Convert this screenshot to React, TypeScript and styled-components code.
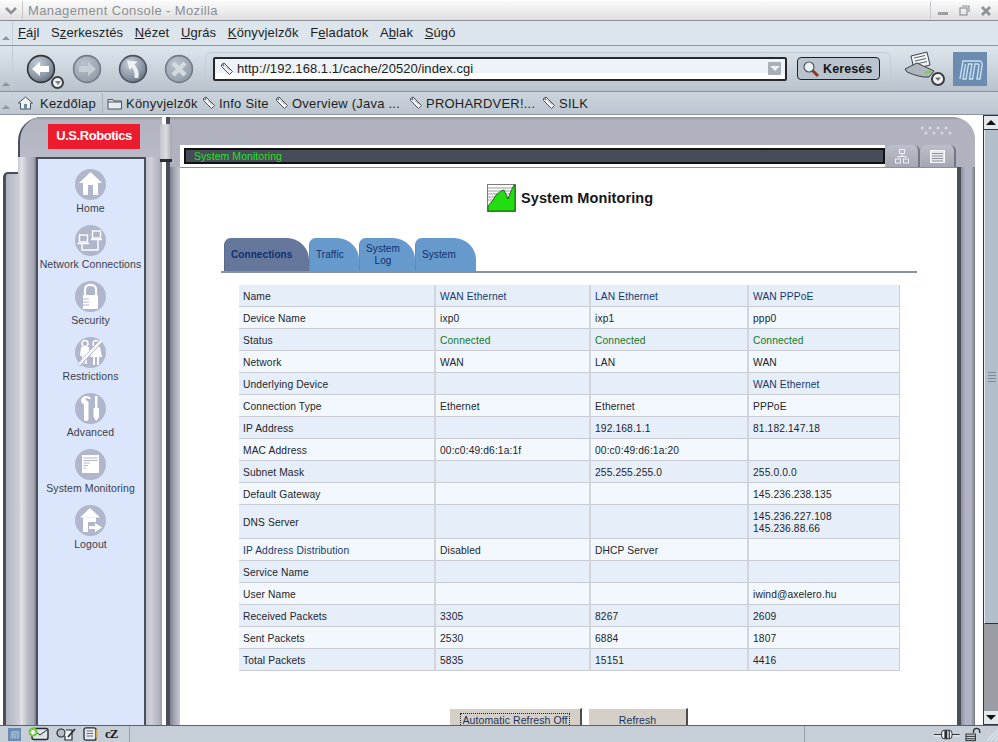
import React from "react";
import styled, { createGlobalStyle } from "styled-components";

const Global = createGlobalStyle`
  html, body { margin: 0; padding: 0; background: #fff; overflow: hidden; }
  #root { width: 998px; height: 742px; }
  * { box-sizing: border-box; }
`;

const DARK = "#4a4e58";
const SANS = `"Liberation Sans", Arial, sans-serif`;

const Window = styled.div`
  width: 998px; height: 742px; display: flex; flex-direction: column; overflow: hidden;
  font-family: ${SANS}; background: #fff;
`;

/* ---------- title bar ---------- */
const TitleBar = styled.div`
  height: 21px; flex: none; display: flex; align-items: stretch;
  background: linear-gradient(#fafafa 0, #f3f3f3 30%, #dedede 100%);
  border-top: 1px solid #fff; border-bottom: 1px solid #868c92;
`;
const TitleMenu = styled.div`
  width: 23px; display: flex; align-items: center; justify-content: center;
  border-right: 1px solid #c6c8ca;
`;
const TitleText = styled.div`
  flex: 1; padding-left: 5px; font-size: 13px; line-height: 19px; color: #8b8f93; letter-spacing: .38px;
`;
const TitleControls = styled.div`
  width: 68px; display: flex; align-items: center; gap: 10px; padding-left: 7px;
  border-left: 1px solid #c6c8ca;
`;

/* ---------- toolbars ---------- */
const BarRow = styled.div<{ $h: number; $bg: string }>`
  height: ${p => p.$h}px; flex: none; display: flex; align-items: stretch;
  background: ${p => p.$bg}; border-bottom: 1px solid #8c949c;
`;
const Grippy = styled.div`
  width: 13px; flex: none; display: flex; align-items: flex-end; justify-content: center;
  padding-bottom: 5px; border-right: 1px solid #c4ccd4; margin-right: 0;
  &::after { content: ""; border-left: 4px solid transparent; border-right: 4px solid transparent; border-bottom: 4px solid #8d959d; }
`;
const MenuList = styled.div`
  display: flex; align-items: center; gap: 11.6px; padding: 0 0 1px 5px;
  font-size: 13px; letter-spacing: .12px; color: #1d1f22;
`;
const ToolRow = styled.div`
  flex: 1; display: flex; align-items: center; padding-left: 13px;
`;
const NavButtons = styled.div`
  width: 179px; flex: none; display: flex; align-items: center; gap: 16px; position: relative;
`;
const BackDrop = styled.span`
  position: absolute; left: 25px; top: 22px; width: 13px; height: 13px; border-radius: 50%;
  background: #eef1f4; border: 2px solid #3c4046; display: flex; align-items: center; justify-content: center;
  &::after { content: ""; border-left: 3px solid transparent; border-right: 3px solid transparent; border-top: 4px solid #7a8088; margin-top: 1px; }
`;
const UrlBox = styled.div`
  width: 686px; height: 33px; flex: none; display: flex; align-items: center; gap: 10px;
  padding-left: 7px; border: 1px solid #c2cad2; border-radius: 6px;
`;
const UrlField = styled.div`
  width: 574px; height: 24px; display: flex; align-items: center; gap: 3px; padding: 0 4px 0 5px;
  border: 2px solid #26282c; border-radius: 2px;
  background: linear-gradient(#edf3f8 0, #edf3f8 72%, #fff 72%);
  font-size: 13px; letter-spacing: .05px; color: #1c1e20;
`;
const UrlText = styled.span`flex: 1;`;
const UrlDrop = styled.span`
  width: 13px; height: 13px; background: #a8afb9; display: flex; align-items: center; justify-content: center; border-radius: 1px;
  &::after { content: ""; border-left: 5px solid transparent; border-right: 5px solid transparent; border-top: 5px solid #eef2f5; }
`;
const SearchButton = styled.div`
  width: 83px; height: 23px; display: flex; align-items: center; gap: 3px; padding-left: 4px;
  border: 1px solid #1e2024; border-radius: 4px; background: #bac4ce;
  font-weight: bold; font-size: 12.5px; letter-spacing: .1px; color: #15171a;
`;
const RightIcons = styled.div`
  margin-left: 12px; display: flex; align-items: center; gap: 8px;
`;
const BookmarkRow = styled.div`
  flex: 1; display: flex; align-items: center; font-size: 13px; letter-spacing: .22px; color: #1d1f22;
`;
const HomeBookmark = styled.div`
  width: 90px; display: flex; align-items: center; gap: 7px; padding-left: 5px; height: 20px;
  border-right: 1px solid #aab2ba; margin-right: 4px;
`;
const Bookmark = styled.div<{ $w: number }>`
  width: ${p => p.$w}px; flex: none; display: flex; align-items: center; gap: 3px; white-space: nowrap;
`;

/* ---------- page area ---------- */
const ContentArea = styled.div`
  flex: 1; min-height: 0; display: flex; overflow: hidden; background: #fff; position: relative;
`;
const Page = styled.div`
  width: 983px; flex: none; display: flex; padding: 2px 8px 0 3px; position: relative; height: 700px;
`;
const OuterTab = styled.div`
  width: 15px; flex: none; margin-top: 55px; border-top-left-radius: 5px;
  border-left: 3px solid ${DARK}; border-top: 2px solid ${DARK};
  background: linear-gradient(90deg, #b2b4c0, #c0c2cc 60%, #cacbd4);
`;
const SideFrame = styled.div`
  width: 144px; flex: none; display: flex; flex-direction: column;
`;
const SideTop = styled.div`
  height: 40px; flex: none; padding: 7px 0 0 30px; background: linear-gradient(#8e909c 0, #b2b4c2 3px, #b8bac8 100%);
  border-top-left-radius: 24px; border-left: 2px solid ${DARK};
`;
const Logo = styled.div`
  width: 92px; height: 25px; margin-left: -2px; background: #ec1c2e; color: #fff; font-weight: bold; font-size: 13px;
  letter-spacing: -.45px; display: flex; align-items: center; justify-content: center; padding-bottom: 2px;
`;
const SideBody = styled.div`flex: 1; display: flex;`;
const SideRailL = styled.div`
  width: 18px; background: linear-gradient(90deg, #c8c9d2 0, #e2e3e7 20%, #b6b8c5 55%, #a8aab6 85%, #7c7e88 100%);
`;
const SideRailR = styled.div`
  width: 16px; background: linear-gradient(90deg, #bfc1cc 0, #cfd0d8 30%, #b2b4c0 80%, #9a9ca8 100%);
`;
const Nav = styled.nav`
  width: 110px; flex: none; background: #dbe5fb; border: 2px solid ${DARK}; border-bottom: none;
  padding: 10px 1px 0 0; display: flex; flex-direction: column; align-items: center;
`;
const NavItem = styled.div`
  height: 56px; width: 100%; flex: none; display: flex; flex-direction: column; align-items: center; gap: 2px;
  font-size: 10.5px; letter-spacing: .1px; color: #3a3f4c; white-space: nowrap;
`;
const Knob = styled.div`
  position: absolute; left: 160px; top: 9px; width: 12px; height: 38px; border-radius: 3px 3px 0 0;
  background: linear-gradient(90deg, #c2c4ce, #dcdde2 50%, #a2a4b0);
  border-bottom: 3px solid #2c2e34;
`;
const MainFrame = styled.div`
  margin-left: 4px; width: 809px; flex: none; display: flex; flex-direction: column;
  background: linear-gradient(#8e909c 0, #b0b2c0 3px, #b4b6c4 100%);
  border-radius: 0 22px 0 0; border-left: 4px solid ${DARK};
`;
const TopStrip = styled.div`
  height: 28px; flex: none; display: flex; justify-content: flex-end; align-items: flex-start; padding: 9px 20px 0 0;
`;
const TitleRow = styled.div`
  height: 22px; flex: none; display: flex; padding: 0 18px 0 10px;
`;
const StatusPlate = styled.div`
  width: 705px; flex: none; background: #fff; padding: 3px 0 3px 4px; 
`;
const StatusBarInner = styled.div`
  height: 16px; border: 2px solid #111; background: #474d58; color: #22e022; font-size: 10.5px; letter-spacing: .06px;
  line-height: 13px; padding-left: 8px;
`;
const FrameTab = styled.div<{ $w: number }>`
  width: ${p => p.$w}px; height: 22px; margin-left: 1px; flex: none; display: flex; align-items: center; justify-content: center;
  border-radius: 6px 6px 0 0; background: linear-gradient(#bcbeca, #a4a6b2); border-right: 2px solid #74767f;
  &:first-of-type { margin-left: 2px; }
`;
const FrameBody = styled.div`flex: 1; display: flex; min-height: 0;`;
const RailL = styled.div`
  width: 10px; flex: none; background: linear-gradient(90deg, #7e808a 0, #a8aab6 50%, #c8c9d2 100%);
`;
const RailR = styled.div`
  width: 18px; flex: none; border-left: 4px solid ${DARK};
  background: linear-gradient(90deg, #8e909c 0, #afb2c4 30%, #b2b5c6 70%, #8f919b 90%, #6e7078 100%);
`;
const Pane = styled.main`
  flex: 1; background: #fff; border-top: 1px solid #8c8e98; padding-top: 15px; display: flex; flex-direction: column; min-width: 0;
`;
const Heading = styled.div`
  height: 29px; flex: none; display: flex; align-items: center; padding-left: 307px; gap: 5px;
  font-size: 14.5px; font-weight: bold; letter-spacing: .1px; color: #14161a;
`;
const TabStrip = styled.div`
  margin: 26px 0 0 41px; width: 696px; height: 35px; flex: none; display: flex; align-items: stretch; padding-left: 3px;
  border-bottom: 2px solid #8892a2;
`;
const Tab = styled.div<{ $w: number; $active?: boolean }>`
  width: ${p => p.$w}px; flex: none; border-radius: 7px 22px 0 0; display: flex; align-items: center; padding: 1px 0 0 ${p => (p.$active ? 6 : 6)}px;
  background: ${p => (p.$active ? "#66779c" : "#6699cc")}; border-left: 1px solid ${p => (p.$active ? "#5a6a8c" : "#5f8cba")};
  color: #10306c; font-size: 10px; letter-spacing: .08px; line-height: 12px; font-weight: ${p => (p.$active ? "bold" : "normal")};
`;
const TwoLine = styled.span`display: block; text-align: center; width: 34px;`;
const DataTable = styled.table`
  margin: 12px 0 0 59px; width: 661px; flex: none; border-collapse: separate; border-spacing: 0; table-layout: fixed;
  font-size: 10.25px; letter-spacing: .12px; color: #22252a; border-right: 1px solid #c8d0d8;
`;
const Row = styled.tr<{ $odd: boolean }>`
  background: ${p => (p.$odd ? "#e6eefa" : "#f2f8fe")};
`;
const Cell = styled.td<{ $tone?: string; $tall?: boolean }>`
  height: ${p => (p.$tall ? 34 : 22)}px; padding: 2px 4px 0; border-bottom: 1px solid #c8ccd2; border-right: 2px solid #d2d6da;
  line-height: 12px; vertical-align: middle; white-space: nowrap;
  color: ${p => (p.$tone === "link" ? "#16386e" : p.$tone === "ok" ? "#157a24" : "#22252a")};
  &:last-child { border-right: none; }
`;
const Buttons = styled.div`
  margin: 37px 0 0 270px; display: flex; gap: 7px; flex: none;
`;
const PageButton = styled.div<{ $w: number }>`
  width: ${p => p.$w}px; height: 30px; background: #d4d0c8; border-top: 1px solid #fff; border-right: 2px solid #4c4c4c;
  display: flex; justify-content: center; padding-top: 4px; font-size: 10.5px; letter-spacing: .1px; color: #1c3260;
`;
const FocusText = styled.span<{ $on?: boolean }>`
  height: 14px; line-height: 12px; padding: 0 1px; border: 1px dotted ${p => (p.$on ? "#222" : "transparent")};
`;

/* ---------- scrollbar ---------- */
const Scrollbar = styled.div`
  width: 15px; flex: none; height: 100%; display: flex; flex-direction: column; background: #9a9da4; border-left: 1px solid #33353a; border-top: 1px solid #33353a;
`;
const ScrollBtn = styled.div<{ $down?: boolean }>`
  height: 14px; flex: none; background: #e4e9ee; border-bottom: 1px solid #33353a; display: flex; align-items: center; justify-content: center;
  &::after { content: ""; border-left: 5px solid transparent; border-right: 5px solid transparent;
    ${p => (p.$down ? "border-top: 5px solid #111;" : "border-bottom: 5px solid #111;")} }
`;
const Thumb = styled.div`
  height: 494px; flex: none; background: #b2bec9; border-left: 1px solid #e6ebf0; border-bottom: 1px solid #33353a;
  display: flex; flex-direction: column; gap: 2px; align-items: center; justify-content: center;
`;
const ThumbLine = styled.span`width: 8px; height: 1px; background: #7e8a96;`;
const Track = styled.div`flex: 1;`;

/* ---------- status bar ---------- */
const StatusBar = styled.footer`
  height: 17px; flex: none; display: flex; align-items: center; background: #c6cfd8; border-top: 1px solid #5c6068;
`;
const StatusIcons = styled.div`
  width: 130px; height: 100%; flex: none; display: flex; align-items: center; gap: 7px; padding-left: 8px; border-right: 1px solid #98a0a8;
`;
const StatusMid = styled.div`flex: 1; height: 100%; border-right: 1px solid #98a0a8;`;
const StatusRight = styled.div`
  width: 193px; height: 100%; flex: none; display: flex; align-items: center; padding-left: 129px; gap: 5px;
`;
const CzMark = styled.span`
  font-family: "Liberation Serif", serif; font-weight: bold; font-size: 13px; color: #1a1c20; letter-spacing: -1px; line-height: 14px;
`;

/* ---------- drawings ---------- */
const Defs = () => (
  <svg width="0" height="0" style={{ position: "absolute" }}>
    <defs>
      <radialGradient id="ball" cx="38%" cy="30%" r="80%">
        <stop offset="0" stopColor="#c4ced8" />
        <stop offset=".6" stopColor="#8e9aa8" />
        <stop offset="1" stopColor="#5d6672" />
      </radialGradient>
      <radialGradient id="ballDim" cx="38%" cy="30%" r="80%">
        <stop offset="0" stopColor="#b8c2cc" />
        <stop offset=".7" stopColor="#9aa6b2" />
        <stop offset="1" stopColor="#8a95a1" />
      </radialGradient>
    </defs>
  </svg>
);

const Ball = ({ dim, dark, children }: { dim?: boolean; dark?: boolean; children: React.ReactNode }) => (
  <svg width="30" height="30" viewBox="0 0 30 30">
    <circle cx="15" cy="15" r="13.4" fill={dim ? "url(#ballDim)" : "url(#ball)"} stroke={dark ? "#30343a" : dim ? "#727b86" : "#4c5460"} strokeWidth="1.6" />
    {children}
  </svg>
);

const Tag = () => (
  <svg width="14" height="14" viewBox="0 0 14 14" fill="none" stroke="#4a5058" strokeWidth="1">
    <path d="M1.5 2.5 L4 1 L12.5 9.5 L9.5 12.5 L1.5 4.5 Z" fill="#f4f6f8" />
    <circle cx="3.4" cy="3.2" r=".6" />
    <path d="M6 4.5 L10 8.5" stroke="#9aa2aa" />
  </svg>
);

const nf = "#fff";
const circleFill = "#b0b6cc";
const NavGlyph = ({ kind }: { kind: string }) => (
  <svg width="31" height="31" viewBox="0 0 31 31">
    <circle cx="15.5" cy="15.5" r="15.5" fill={circleFill} />
    {kind === "home" && (
      <g fill={nf}>
        <path d="M15.5 3 L27 14 H4 Z" />
        <path d="M8 14 H23 V26 H18 V16 H13 V26 H8 Z" />
      </g>
    )}
    {kind === "net" && (
      <g fill="none" stroke={nf} strokeWidth="1.4">
        <rect x="4.5" y="10" width="8" height="7" />
        <rect x="17.5" y="6" width="8" height="7" />
        <path d="M2.5 18.5 H14 M16 14.5 H27" />
        <path d="M7 19 V25 H23 V15" />
      </g>
    )}
    {kind === "lock" && (
      <g>
        <path d="M10 15 V8 C10 2.5 21 2.5 21 8 V15" fill="none" stroke={nf} strokeWidth="2.2" />
        <rect x="8" y="14" width="15" height="14" fill={nf} />
        <path d="M8 18 H14 M8 21 H14 M8 24 H14" stroke={circleFill} strokeWidth="1" />
      </g>
    )}
    {kind === "kids" && (
      <g fill={nf}>
        <circle cx="10" cy="6.5" r="3" fill="none" stroke={nf} strokeWidth="1.5" />
        <path d="M6 10 H14 L15 19 H12 V27 H10 V20 H9 V27 H7 V19 H5 Z" />
        <circle cx="21" cy="6.5" r="3" fill="none" stroke={nf} strokeWidth="1.5" />
        <path d="M17 10 H25 L27 20 H24 V28 H22 V20 H20 V28 H18 V20 H15 Z" />
        <path d="M26 4 L4 28" stroke={circleFill} strokeWidth="4" />
        <path d="M26.5 3.5 L4 27.5" stroke={nf} strokeWidth="2.2" />
      </g>
    )}
    {kind === "tools" && (
      <g fill={nf}>
        <path d="M6 7 C7 2 15 2 16 6 L14 6 C13 5 11 5 10 6 L13.5 9 V26 C13.5 28.5 9 28.5 9 26 V11 C7 11 6 9 6 7 Z" />
        <rect x="20" y="3" width="2.4" height="12" />
        <path d="M18.5 15 H24 V24 L21.2 28 L18.5 24 Z" />
      </g>
    )}
    {kind === "monitor" && (
      <g>
        <rect x="7" y="6" width="17" height="18" fill={nf} />
        <path d="M8.5 9 H22.5 M8.5 11.5 H22.5 M8.5 14 H15 M8.5 16.5 H13 M8.5 19 H11" stroke={circleFill} strokeWidth="1" />
      </g>
    )}
    {kind === "logout" && (
      <g fill={nf}>
        <path d="M15 3 L25 12.5 H5 Z" />
        <path d="M8 12.5 H21 V17 H13 V27 H8 Z" />
        <path d="M14 21 H20 V18 L27 22.5 L20 27 V24 H14 Z" />
      </g>
    )}
  </svg>
);

const MLogo = ({ size }: { size: number }) => (
  <svg width={size} height={size} viewBox="0 0 34 34">
    <rect width="34" height="34" fill="#6b8cae" />
    <path d="M7 27 L10 9 H26 C29 9 29.5 11 29 14 L27 27 H24 L26 13 C26 12 25.5 12 25 12 H22 L19.5 27 H16.5 L19 12 H15.5 L13 27 H10 L12.5 12"
      fill="none" stroke="#c8e0f4" strokeWidth="1.4" />
  </svg>
);

const MENU: [string, string, string][] = [
  ["", "F", "ájl"], ["S", "z", "erkesztés"], ["", "N", "ézet"], ["", "U", "grás"],
  ["", "K", "önyvjelzők"], ["F", "e", "ladatok"], ["A", "b", "lak"], ["", "S", "úgó"],
];

const NAV: [string, string][] = [
  ["home", "Home"], ["net", "Network Connections"], ["lock", "Security"], ["kids", "Restrictions"],
  ["tools", "Advanced"], ["monitor", "System Monitoring"], ["logout", "Logout"],
];

type C = string | [string, string];
const L = (t: string): C => [t, "link"];
const K = (t: string): C => [t, "ok"];
const ROWS: C[][] = [
  ["Name", L("WAN Ethernet"), L("LAN Ethernet"), L("WAN PPPoE")],
  ["Device Name", "ixp0", "ixp1", "ppp0"],
  ["Status", K("Connected"), K("Connected"), K("Connected")],
  ["Network", "WAN", "LAN", "WAN"],
  ["Underlying Device", "", "", L("WAN Ethernet")],
  ["Connection Type", "Ethernet", "Ethernet", "PPPoE"],
  ["IP Address", "", "192.168.1.1", "81.182.147.18"],
  ["MAC Address", "00:c0:49:d6:1a:1f", "00:c0:49:d6:1a:20", ""],
  ["Subnet Mask", "", "255.255.255.0", "255.0.0.0"],
  ["Default Gateway", "", "", "145.236.238.135"],
  ["DNS Server", "", "", "145.236.227.108\n145.236.88.66"],
  [L("IP Address Distribution"), "Disabled", "DHCP Server", ""],
  ["Service Name", "", "", ""],
  ["User Name", "", "", "iwind@axelero.hu"],
  ["Received Packets", "3305", "8267", "2609"],
  ["Sent Packets", "2530", "6884", "1807"],
  ["Total Packets", "5835", "15151", "4416"],
];

const renderCell = (c: C, i: number, tall: boolean) => {
  const text = typeof c === "string" ? c : c[0];
  const tone = typeof c === "string" ? undefined : c[1];
  return (
    <Cell key={i} $tone={tone} $tall={tall}>
      {text.split("\n").map((t, j) => (j === 0 ? t : <React.Fragment key={j}><br />{t}</React.Fragment>))}
    </Cell>
  );
};

export default function App() {
  return (
    <Window>
      <Global />
      <Defs />
      <TitleBar>
        <TitleMenu>
          <svg width="12" height="8" viewBox="0 0 12 8"><path d="M1 1 L6 6 L11 1" fill="none" stroke="#8e9296" strokeWidth="2.6" /></svg>
        </TitleMenu>
        <TitleText>Management Console - Mozilla</TitleText>
        <TitleControls>
          <svg width="11" height="10" viewBox="0 0 11 10"><rect x="0" y="6" width="10" height="3" fill="#9a9ea2" /></svg>
          <svg width="11" height="11" viewBox="0 0 11 11" fill="none" stroke="#8e9296" strokeWidth="1.2"><rect x="1" y="3" width="7" height="7" /><path d="M3 1 H10 V7" /></svg>
          <svg width="12" height="12" viewBox="0 0 12 12"><path d="M2 2 L10 10 M10 2 L2 10" stroke="#8e9296" strokeWidth="2.8" /></svg>
        </TitleControls>
      </TitleBar>

      <BarRow $h={25} $bg="#dce4ec">
        <Grippy />
        <MenuList>
          {MENU.map(([a, u, b]) => <span key={a + u + b}>{a}<u>{u}</u>{b}</span>)}
        </MenuList>
      </BarRow>

      <BarRow $h={46} $bg="linear-gradient(#dde5ec, #c8d1da 60%, #b8c2cc)">
        <Grippy />
        <ToolRow>
          <NavButtons>
            <Ball dark>
              <path d="M6 15 L14 8 V12 H23 V18 H14 V22 Z" fill="#fff" />
            </Ball>
            <BackDrop />
            <Ball dim>
              <path d="M24 15 L16 8 V12 H7 V18 H16 V22 Z" fill="#c6ced6" />
            </Ball>
            <Ball>
              <path d="M9 6.5 L19.5 7.5 L11.5 16 Z" fill="#eef1f4" />
              <path d="M14 11 Q19.5 15.5 18.5 24" fill="none" stroke="#eef1f4" strokeWidth="4" />
            </Ball>
            <Ball dim>
              <path d="M9 9 L21 21 M21 9 L9 21" stroke="#d4dae0" strokeWidth="4.5" />
            </Ball>
          </NavButtons>
          <UrlBox>
            <UrlField>
              <Tag />
              <UrlText>http://192.168.1.1/cache/20520/index.cgi</UrlText>
              <UrlDrop />
            </UrlField>
            <SearchButton>
              <svg width="18" height="18" viewBox="0 0 18 18">
                <path d="M10 10 L16 16" stroke="#8c3a20" strokeWidth="3" />
                <circle cx="7" cy="7" r="5" fill="#e8f0f6" stroke="#50565c" strokeWidth="1.2" />
              </svg>
              Keresés
            </SearchButton>
          </UrlBox>
          <RightIcons>
            <svg width="42" height="36" viewBox="0 0 42 36">
              <path d="M8 5 L24 1 L27 14 L11 18 Z" fill="#f2f4f6" stroke="#3c4046" />
              <path d="M11 7 L22 4.5 M12 10 L23 7.5 M13 13 L24 10.5" stroke="#5c6268" />
              <path d="M2 18 L14 12 L31 20 L26 26 Q18 27 4 21 Z" fill="#aeb6be" stroke="#3a3e44" />
              <path d="M22 22 L29 20" stroke="#7acc44" strokeWidth="2" />
              <circle cx="35" cy="28" r="6" fill="#f2f4f6" stroke="#3a3e44" strokeWidth="2" />
              <path d="M32 26.5 H38 L35 30 Z" fill="#6a7078" />
            </svg>
            <MLogo size={34} />
          </RightIcons>
        </ToolRow>
      </BarRow>

      <BarRow $h={23} $bg="linear-gradient(#ccd5dd, #bcc6d0)">
        <Grippy />
        <BookmarkRow>
          <HomeBookmark>
            <svg width="15" height="14" viewBox="0 0 15 14">
              <path d="M0.5 7 L7.5 1 L14.5 7 L12.5 7 V13 H2.5 V7 Z" fill="#eef2f6" stroke="#48505a" />
              <rect x="6" y="8" width="3" height="5" fill="#6a8aa4" />
            </svg>
            Kezdőlap
          </HomeBookmark>
          <Bookmark $w={95}>
            <svg width="16" height="13" viewBox="0 0 16 13" fill="#e8ecf0" stroke="#4c525a"><path d="M1 2.5 H6 L7 4 H14.5 V12 H1 Z" /><path d="M1 5 H14.5" fill="none" /></svg>
            <span>Könyvjelzők</span>
          </Bookmark>
          <Bookmark $w={73}><Tag /><span>Info Site</span></Bookmark>
          <Bookmark $w={134}><Tag /><span>Overview (Java ...</span></Bookmark>
          <Bookmark $w={133}><Tag /><span>PROHARDVER!...</span></Bookmark>
          <Bookmark $w={50}><Tag /><span>SILK</span></Bookmark>
        </BookmarkRow>
      </BarRow>

      <ContentArea>
        <Page>
          <OuterTab />
          <SideFrame>
            <SideTop><Logo>U.S.Robotics</Logo></SideTop>
            <SideBody>
              <SideRailL />
              <Nav>
                {NAV.map(([k, t]) => (
                  <NavItem key={k}><NavGlyph kind={k} /><span>{t}</span></NavItem>
                ))}
              </Nav>
              <SideRailR />
            </SideBody>
          </SideFrame>
          <Knob />
          <MainFrame>
            <TopStrip>
              <svg width="34" height="10" viewBox="0 0 34 10" fill="#d8dae2">
                {[1, 9, 17, 25].map(x => <circle key={x} cx={x} cy="2" r="1.5" />)}
                {[5, 13, 21, 29].map(x => <circle key={x} cx={x} cy="7" r="1.5" />)}
              </svg>
            </TopStrip>
            <TitleRow>
              <StatusPlate><StatusBarInner>System Monitoring</StatusBarInner></StatusPlate>
              <FrameTab $w={34}>
                <svg width="14" height="15" viewBox="0 0 14 15" fill="none" stroke="#eef0f4"><rect x="4.5" y=".5" width="5" height="4" /><path d="M7 5 V7.5 M3 9 V7.5 H11 V9" /><rect x=".5" y="10" width="5" height="4" /><rect x="8.5" y="10" width="5" height="4" /></svg>
              </FrameTab>
              <FrameTab $w={35}>
                <svg width="15" height="13" viewBox="0 0 15 13"><rect x=".5" y=".5" width="14" height="12" fill="#e6e8ee" stroke="#f6f7f9" /><path d="M2 3.5 H13 M2 6 H13 M2 8.5 H13 M2 11 H13" stroke="#8e909c" /></svg>
              </FrameTab>
            </TitleRow>
            <FrameBody>
              <RailL />
              <Pane>
                <Heading>
                  <svg width="29" height="28" viewBox="0 0 29 28">
                    <rect x=".5" y=".5" width="28" height="27" fill="#fff" stroke="#7d7d7d" />
                    <path d="M1 4 H28 M1 7 H28 M1 10 H28 M1 13 H28 M1 16 H28" stroke="#9a9a9a" />
                    <path d="M1 27 V22 L6 16 L9 11 L14 7 L17 6 L21 15 L24 7 L27 1 L28 1 V27 Z" fill="#22dd10" stroke="#144a10" strokeWidth=".8" />
                  </svg>
                  <span>System Monitoring</span>
                </Heading>
                <TabStrip>
                  <Tab $w={85} $active>Connections</Tab>
                  <Tab $w={50}>Traffic</Tab>
                  <Tab $w={56}><TwoLine>System Log</TwoLine></Tab>
                  <Tab $w={61}>System</Tab>
                </TabStrip>
                <DataTable>
                  <colgroup>
                    <col style={{ width: 197 }} /><col style={{ width: 155 }} /><col style={{ width: 158 }} /><col />
                  </colgroup>
                  <tbody>
                    {ROWS.map((r, i) => (
                      <Row key={i} $odd={i % 2 === 0}>
                        {r.map((c, j) => renderCell(c, j, i === 10))}
                      </Row>
                    ))}
                  </tbody>
                </DataTable>
                <Buttons>
                  <PageButton $w={132}><FocusText $on>Automatic Refresh Off</FocusText></PageButton>
                  <PageButton $w={99}><FocusText>Refresh</FocusText></PageButton>
                </Buttons>
              </Pane>
              <RailR />
            </FrameBody>
          </MainFrame>
        </Page>
        <Scrollbar>
          <ScrollBtn />
          <Thumb><ThumbLine /><ThumbLine /><ThumbLine /><ThumbLine /></Thumb>
          <Track />
          <ScrollBtn $down />
        </Scrollbar>
      </ContentArea>

      <StatusBar>
        <StatusIcons>
          <MLogo size={13} />
          <svg width="21" height="14" viewBox="0 0 21 14">
            <rect x="4" y="1.5" width="16" height="11" rx="2" fill="#dce4ea" stroke="#262a30" strokeWidth="1.4" />
            <path d="M5 3 L12 8 L19 3" fill="none" stroke="#262a30" />
            <circle cx="5" cy="5" r="4.5" fill="#6ecb3c" />
            <path d="M3.5 3 H6.5 V5 H8 L5 8 L2 5 H3.5 Z" fill="#fff" />
          </svg>
          <svg width="20" height="14" viewBox="0 0 20 14" fill="none" stroke="#262a30" strokeWidth="1.2">
            <circle cx="5" cy="6" r="4" fill="#b4bcc4" />
            <path d="M10 3 H16 V13 H9 V9" fill="#eef0f2" />
            <path d="M12 10 L19 2" strokeWidth="1.6" />
          </svg>
          <svg width="15" height="14" viewBox="0 0 15 14">
            <rect x="1" y=".8" width="12" height="12.4" rx="2" fill="#e6eaee" stroke="#262a30" strokeWidth="1.3" />
            <path d="M3.5 4 H10 M3.5 6.5 H10 M3.5 9 H10" stroke="#6a7078" />
            <rect x="13" y="3" width="1.5" height="8" fill="#d2a93c" />
          </svg>
          <CzMark>cZ</CzMark>
        </StatusIcons>
        <StatusMid />
        <StatusRight>
          <svg width="27" height="13" viewBox="0 0 27 13">
            <path d="M0 6.5 H27" stroke="#2a2c30" strokeWidth="1" />
            <path d="M0 8 H27" stroke="#f4f6f8" strokeWidth="1" />
            <rect x="8" y="2" width="11" height="9" rx="3" fill="#eef0f2" stroke="#2a2c30" />
            <rect x="11" y="2" width="3" height="9" fill="#2a2c30" />
            <rect x="15.5" y="2" width="1.2" height="9" fill="#2a2c30" />
          </svg>
          <svg width="17" height="15" viewBox="0 0 17 15" fill="none" stroke="#2a2c30">
            <rect x="1" y="7" width="10" height="7" fill="#c8d0d8" />
            <path d="M1 9.5 H11 M1 12 H11" />
            <path d="M9 6 V4 C9 0 15.5 0 15.5 4 V6" strokeWidth="1.4" />
          </svg>
          <svg width="13" height="14" viewBox="0 0 13 14" stroke="#f0f4f8"><path d="M1 14 L13 2 M5 14 L13 6 M9 14 L13 10" /></svg>
        </StatusRight>
      </StatusBar>
    </Window>
  );
}
